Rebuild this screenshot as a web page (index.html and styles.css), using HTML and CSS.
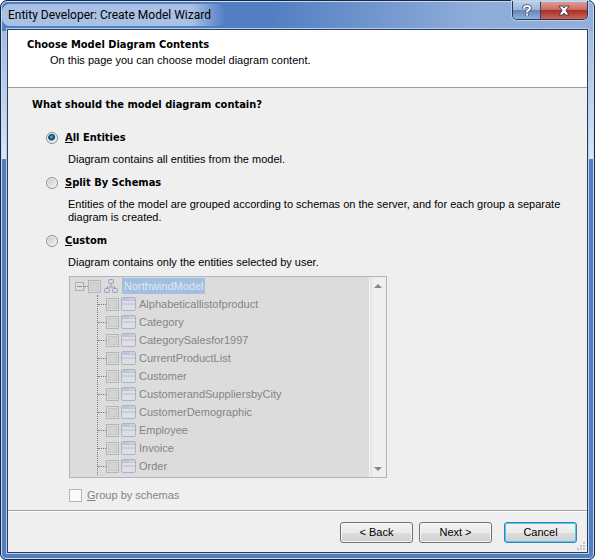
FILE: index.html
```html
<!DOCTYPE html>
<html lang="en">
<head>
<meta charset="utf-8">
<title>Entity Developer: Create Model Wizard</title>
<link rel="stylesheet" href="styles.css">
</head>
<body>
<svg class="sprites" aria-hidden="true">
  <symbol id="entity" viewBox="0 0 15 14">
    <rect x=".5" y=".5" width="14" height="13" rx="1.5" fill="#dfdfe1" stroke="#aab3c9"/>
    <path d="M1 1h13v3H1z" fill="#bcc5dc"/><path d="M8 1h6v2H8z" fill="#c9d0e1"/>
    <path d="M1 6h13v2H1z" fill="#c6cee0"/>
  </symbol>
</svg>
<div class="window">
  <div class="titlebar">
    <h1 class="title">Entity Developer: Create Model Wizard</h1>
    <div class="caption-buttons">
      <button class="help" aria-label="Help"><svg width="10" height="13" viewBox="0 0 10 13"><path d="M2 4.500V3.500Q2.500 2 5 2Q8 2 8 4Q8 5.200 6.500 6Q5 6.800 5 8.500M5 10v1.500" fill="none" stroke="#3c4860" stroke-width="3.600"/><path d="M2 4.500V3.500Q2.500 2 5 2Q8 2 8 4Q8 5.200 6.500 6Q5 6.800 5 8.500M5 10v1.500" fill="none" stroke="#fff" stroke-width="2"/></svg></button>
      <button class="close" aria-label="Close"><svg width="12" height="11" viewBox="0 0 12 11"><path d="M1 1h3.500L6 3l1.500-2H11L8 5.500 11 10H7.500L6 8l-1.500 2H1l3-4.500z" fill="#fff" stroke="#4a3f50"/></svg></button>
    </div>
  </div>
  <main class="client">
    <header class="page-header">
      <h2>Choose Model Diagram Contents</h2>
      <p>On this page you can choose model diagram content.</p>
    </header>
    <form class="content">
      <h3>What should the model diagram contain?</h3>
      <div class="choice">
        <input type="radio" name="scope" id="all" checked>
        <label for="all"><u>A</u>ll Entities</label>
        <p>Diagram contains all entities from the model.</p>
      </div>
      <div class="choice">
        <input type="radio" name="scope" id="split">
        <label for="split"><u>S</u>plit By Schemas</label>
        <p>Entities of the model are grouped according to schemas on the server, and for each group a separate diagram is created.</p>
      </div>
      <div class="choice">
        <input type="radio" name="scope" id="custom">
        <label for="custom"><u>C</u>ustom</label>
        <p>Diagram contains only the entities selected by user.</p>
      </div>
      <div class="tree">
        <div class="tree-view">
          <div class="root">
            <button type="button" class="expander" aria-label="Collapse" disabled></button><span class="stub"></span>
            <input type="checkbox" id="root" disabled>
            <svg class="model" width="14" height="14" viewBox="0 0 14 14" fill="#d3d6df" stroke="#98a1bb"><path d="M7 5v3M3 10V8h8v2" fill="none"/><rect x="4.500" y=".5" width="5" height="4" rx="1"/><rect x=".5" y="9.500" width="5" height="4" rx="1"/><rect x="8.500" y="9.500" width="5" height="4" rx="1"/></svg>
            <label for="root">NorthwindModel</label>
          </div>
          <ul>
            <li><input type="checkbox" id="e1" disabled><svg><use href="#entity"/></svg><label for="e1">Alphabeticallistofproduct</label></li>
            <li><input type="checkbox" id="e2" disabled><svg><use href="#entity"/></svg><label for="e2">Category</label></li>
            <li><input type="checkbox" id="e3" disabled><svg><use href="#entity"/></svg><label for="e3">CategorySalesfor1997</label></li>
            <li><input type="checkbox" id="e4" disabled><svg><use href="#entity"/></svg><label for="e4">CurrentProductList</label></li>
            <li><input type="checkbox" id="e5" disabled><svg><use href="#entity"/></svg><label for="e5">Customer</label></li>
            <li><input type="checkbox" id="e6" disabled><svg><use href="#entity"/></svg><label for="e6">CustomerandSuppliersbyCity</label></li>
            <li><input type="checkbox" id="e7" disabled><svg><use href="#entity"/></svg><label for="e7">CustomerDemographic</label></li>
            <li><input type="checkbox" id="e8" disabled><svg><use href="#entity"/></svg><label for="e8">Employee</label></li>
            <li><input type="checkbox" id="e9" disabled><svg><use href="#entity"/></svg><label for="e9">Invoice</label></li>
            <li><input type="checkbox" id="e10" disabled><svg><use href="#entity"/></svg><label for="e10">Order</label></li>
          </ul>
        </div>
        <div class="scrollbar">
          <svg width="8" height="4" viewBox="0 0 8 4"><path d="M4 0l4 4H0z" fill="#888"/></svg>
          <svg width="8" height="4" viewBox="0 0 8 4"><path d="M0 0h8L4 4z" fill="#888"/></svg>
        </div>
      </div>
      <div class="group">
        <input type="checkbox" id="group" disabled>
        <label for="group"><u>G</u>roup by schemas</label>
      </div>
    </form>
    <footer class="actions">
      <button>&lt; Back</button>
      <button>Next &gt;</button>
      <button class="cancel">Cancel</button>
      <svg class="grip" width="9" height="9" viewBox="0 0 9 9"><path d="M6 0h2v2H6zM3 3h2v2H3zM6 3h2v2H6zM0 6h2v2H0zM3 6h2v2H3zM6 6h2v2H6z" fill="#c4c4c4"/></svg>
    </footer>
  </main>
</div>
</body>
</html>
```
FILE: styles.css
```css
* { box-sizing: border-box; }
body {
  margin: 0;
  background: #fff;
  color: #000;
  font: 11px/13px "Liberation Sans", Arial, sans-serif;
}
h1, h2, h3, p, ul { margin: 0; padding: 0; }
h2, h3, .choice label { font: bold 11px/14px "DejaVu Sans Condensed", "DejaVu Sans", sans-serif; }
button { font: inherit; color: inherit; padding: 0; }
.sprites { display: none; }

.window {
  min-height: 100vh;
  display: flex;
  flex-direction: column;
  padding: 0 6px 6px;
  border: 1px solid #172748;
  border-radius: 7px 7px 6px 6px;
  box-shadow: inset 0 0 0 1px #c5dcf3;
  background:
    linear-gradient(100deg, transparent 45%, #8fadd9 80%, #92afdb) top / 100% 30px no-repeat,
    linear-gradient(#527ec2, #527ec2) top / 100% 30px no-repeat,
    linear-gradient(#93b0db, #dbe5f5 158px, #527ec2 158px);
}
.titlebar {
  display: flex;
  justify-content: space-between;
  height: 28px;
}
.title {
  align-self: center;
  margin-left: -5px;
  padding: 0 14px 0 6px;
  font: 12px/22px Roboto, "Liberation Sans", sans-serif;
  background: linear-gradient(90deg, #a9c1e4, #a9c1e4 85%, transparent);
  border-radius: 8px;
  white-space: nowrap;
}
.caption-buttons {
  display: flex;
  height: 19px;
  border: 1px solid #25365a;
  border-top: 0;
  border-radius: 0 0 5px 5px;
  box-shadow: 0 0 0 1px #b8cfec;
  overflow: hidden;
}
.caption-buttons button {
  display: grid;
  place-items: center;
  border: 0;
  border-top: 1px solid #c8d8ed;
}
.caption-buttons .help {
  width: 28px;
  border-right: 1px solid #35436a;
  background: linear-gradient(#b9cce8, #9cb4d8 50%, #6686b9 50%, #8fb0dc);
}
.caption-buttons .close {
  width: 46px;
  background: linear-gradient(#dd9a91, #c9675c 50%, #ab2f25 50%, #cd6652);
}

.client {
  flex: 1;
  display: flex;
  flex-direction: column;
  background: #efefef;
  border: 1px solid #293c62;
  box-shadow: 0 0 0 1px #b7cde9;
}
.page-header {
  height: 58px;
  padding: 8px 19px 0;
  background: #fff;
  border-bottom: 1px solid #a0a0a0;
}
.page-header p { padding: 2px 0 0 23px; }

.content { padding: 10px 20px 0 24px; flex: 1; }
.choice {
  display: grid;
  grid-template-columns: 12px 1fr;
  column-gap: 7px;
  align-items: center;
  margin: 0 0 10px 14px;
}
h3 + .choice { margin-top: 19px; }
.choice p { grid-column: 2; padding: 8px 0 0 3px; }
.choice input {
  appearance: none;
  width: 12px;
  height: 12px;
  margin: 0;
  border: 1px solid #8e8f8f;
  border-radius: 50%;
  background: linear-gradient(135deg, #c2c5c9, #f6f6f6);
  box-shadow: inset 0 0 0 1px #f4f4f4;
}
.choice input:checked {
  background: radial-gradient(circle at 45% 40%, #65c3ec, #155f93 2px, #12395d 3px, #dbe3e9 4px);
}

.tree {
  display: flex;
  width: 318px;
  height: 202px;
  margin-left: 37px;
  margin-top: -3px;
  border: 1px solid #b4b4b4;
  background: #dcdcdc;
  color: #858585;
}
.tree-view { flex: 1; overflow: hidden; }
.root, .tree li { display: flex; align-items: center; height: 18px; }
.root { padding-left: 5px; }
.root label {
  margin-left: 4px;
  padding: 1px 2px 1px 2px;
  line-height: 14px;
  background: #a0bfe1;
  color: #e4e8ed;
}
.expander {
  width: 9px;
  height: 9px;
  border: 1px solid #aaafb9;
  background: linear-gradient(#8490aa, #8490aa) center / 5px 1px no-repeat #dedede;
}
.stub { width: 4px; border-top: 1px dotted #808080; }
.tree ul {
  list-style: none;
  margin-left: 27px;
  border-left: 1px dotted #808080;
}
.tree li::before { content: ""; width: 8px; border-top: 1px dotted #808080; }
.tree li svg { width: 15px; height: 14px; margin: 0 3px 0 2px; }
.model { margin-left: 3px; }
input[type="checkbox"] {
  appearance: none;
  flex: none;
  width: 13px;
  height: 13px;
  margin: 0;
  border: 1px solid #b5b5b5;
  background: #d3d3d3;
  box-shadow: inset 0 0 0 1px #dcdcdc, inset 0 0 0 2px #c8c8c8;
}
.scrollbar {
  display: flex;
  flex-direction: column;
  justify-content: space-between;
  align-items: center;
  width: 17px;
  padding: 7px 0 6px;
  border-left: 1px solid #f4f4f4;
  background: linear-gradient(90deg, #e2e2e2, #efefef 4px);
}
.group {
  display: flex;
  align-items: center;
  gap: 5px;
  margin: 11px 0 0 37px;
  color: #838383;
}
.group input[type="checkbox"] { background: #fafafa; box-shadow: none; }

.actions {
  position: relative;
  display: flex;
  justify-content: flex-end;
  gap: 6px;
  padding: 11px 10px 9px;
  border-top: 1px solid #a0a0a0;
  box-shadow: inset 0 1px #fff;
}
.actions button {
  width: 73px;
  height: 21px;
  border: 1px solid #707070;
  border-radius: 3px;
  background: linear-gradient(#f3f3f3, #ebebeb 50%, #dddddd 50%, #d2d2d2);
  box-shadow: inset 0 0 0 1px #f7f7f7;
}
.actions .cancel {
  margin-left: 6px;
  border-color: #3c7fb1;
  box-shadow: inset 0 0 0 1px #49ccf4;
}
.grip { position: absolute; right: 1px; bottom: 1px; }
```
